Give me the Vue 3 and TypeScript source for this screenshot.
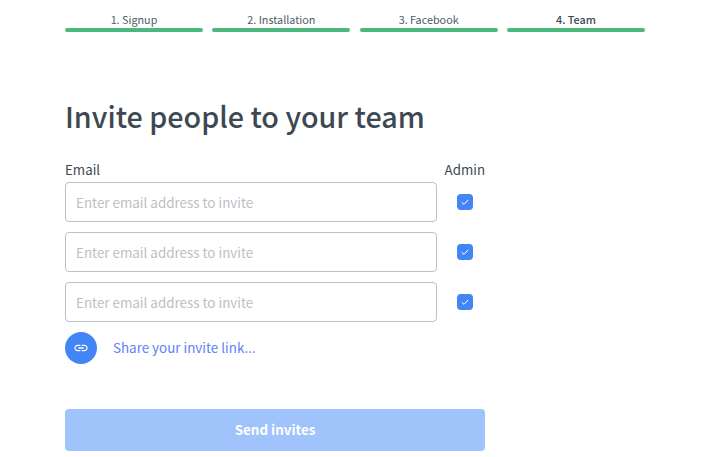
<script setup lang="ts">
const steps = [
  { label: '1. Signup', active: false },
  { label: '2. Installation', active: false },
  { label: '3. Facebook', active: false },
  { label: '4. Team', active: true },
]
const rows = [1, 2, 3]
</script>

<template>
  <div class="page">
    <div class="steps">
      <div v-for="s in steps" :key="s.label" class="step">
        <div class="step-label" :class="{ active: s.active }">{{ s.label }}</div>
        <div class="bar"></div>
      </div>
    </div>
    <form class="form" @submit.prevent>
      <h1 class="title">Invite people to your team</h1>
      <div class="head">
        <span>Email</span>
        <span>Admin</span>
      </div>
      <div class="rows">
        <div v-for="r in rows" :key="r" class="row">
          <input class="email" type="text" placeholder="Enter email address to invite" />
          <div class="check-cell">
            <span class="check">
              <svg width="10" height="10" viewBox="0 0 10 10" fill="none">
                <path d="M1.8 5.4 L4 7.4 L8.2 2.8" stroke="#fff" stroke-width="1" />
              </svg>
            </span>
          </div>
        </div>
      </div>
      <div class="share">
        <span class="share-icon">
          <svg width="16" height="16" viewBox="0 0 24 24" fill="#fff">
            <path d="M3.9 12c0-1.71 1.39-3.1 3.1-3.1h4V7H7c-2.76 0-5 2.24-5 5s2.24 5 5 5h4v-1.9H7c-1.71 0-3.1-1.39-3.1-3.1zM8 13h8v-2H8v2zm9-6h-4v1.9h4c1.71 0 3.1 1.39 3.1 3.1s-1.39 3.1-3.1 3.1h-4V17h4c2.76 0 5-2.24 5-5s-2.24-5-5-5z" />
          </svg>
        </span>
        <span class="share-text">Share your invite link...</span>
      </div>
      <button class="send" type="button">Send invites</button>
    </form>
  </div>
</template>

<style>
html, body { margin: 0; background: #fff; }
</style>

<style scoped>
.page {
  width: 712px;
  height: 457px;
  box-sizing: border-box;
  padding: 12px 67px 0 65px;
  overflow: hidden;
  font-family: "Noto Sans CJK SC", "Noto Sans", sans-serif;
  color: #3d4852;
}
.steps {
  display: flex;
  gap: 9.33px;
}
.step { flex: 1; }
.step-label {
  font-size: 10.8px;
  line-height: 14px;
  height: 16px;
  text-align: center;
  color: #505b66;
}
.step-label.active {
  font-weight: 500;
  color: #3d4852;
}
.bar {
  height: 4px;
  border-radius: 2px;
  background: #4cb97c;
}
.form {
  width: 420px;
}
.title {
  margin: 64px 0 0;
  font-size: 28.7px;
  line-height: 40px;
  font-weight: 500;
  color: #3d4852;
}
.head {
  display: flex;
  justify-content: space-between;
  margin-top: 24px;
  font-size: 13.3px;
  line-height: 20px;
  height: 22px;
}
.rows {
  display: flex;
  flex-direction: column;
  gap: 10px;
}
.row {
  display: flex;
  align-items: center;
}
.email {
  width: 372px;
  height: 40px;
  box-sizing: border-box;
  padding: 0 10px;
  border: 1px solid #b8c2cc;
  border-radius: 4px;
  outline: none;
  font: inherit;
  font-size: 13.4px;
  color: #3d4852;
  background: #fff;
}
.email::placeholder {
  color: #bcc0c5;
  opacity: 1;
}
.check-cell {
  width: 48px;
  padding-left: 20px;
  box-sizing: border-box;
}
.check {
  width: 16px;
  height: 16px;
  border-radius: 4px;
  background: #4285f4;
  display: flex;
  align-items: center;
  justify-content: center;
}
.share {
  display: flex;
  align-items: center;
  margin-top: 10px;
  gap: 16px;
}
.share-icon {
  width: 32px;
  height: 32px;
  border-radius: 50%;
  background: #4285f4;
  display: flex;
  align-items: center;
  justify-content: center;
}
.share-text {
  font-size: 13.4px;
  line-height: 20px;
  padding-bottom: 2px;
  color: #6082f6;
}
.send {
  display: block;
  width: 420px;
  height: 42px;
  margin-top: 45px;
  padding: 0 0 2px;
  border: 0;
  border-radius: 4px;
  background: #a0c3fc;
  color: #fff;
  font: inherit;
  font-size: 13.4px;
  font-weight: 700;
}
</style>
